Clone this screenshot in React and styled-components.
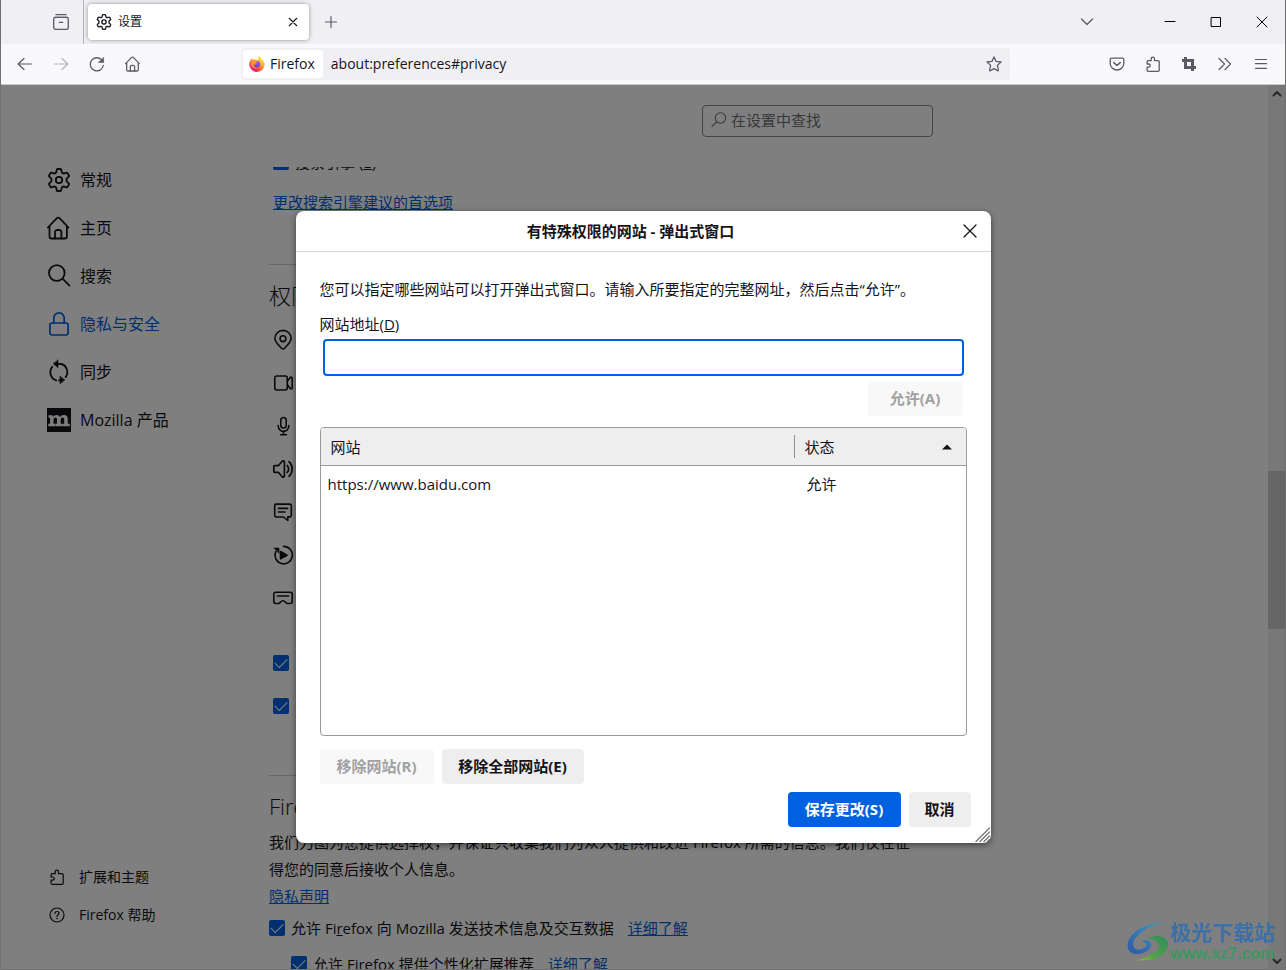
import React from "react";
import styled, { createGlobalStyle, css } from "styled-components";

const GlobalStyle = createGlobalStyle`
  *, *::before, *::after { box-sizing: border-box; }
  body {
    margin: 0;
    font-family: "Open Sans", "Noto Sans CJK SC", sans-serif;
    font-size: 15px;
    line-height: 20px;
    color: #15141a;
  }
  button, input { font: inherit; color: inherit; }
  h1, h2, p, ul { margin: 0; padding: 0; font-weight: 400; }
`;

/* ---------- icons ---------- */

const Svg = styled.svg`
  display: block;
  flex: none;
  fill: none;
  stroke: currentColor;
  stroke-linecap: round;
  stroke-linejoin: round;
  overflow: visible;
`;

const Icon = ({ size = 16, box = 16, weight = 1.2, children }) => (
  <Svg width={size} height={size} viewBox={`0 0 ${box} ${box}`} strokeWidth={weight} aria-hidden="true">
    {children}
  </Svg>
);

const GearIcon = (p) => (
  <Icon box={24} weight={1.8} {...p}>
    <circle cx="12" cy="12" r="3.2" />
    <path d="M10.600 1h2.800c.5 0 .8.300.9.800l.5 2.700 1.900 1.100 2.600-.9c.5-.2.900 0 1.200.4l1.400 2.400c.2.400.2.900-.2 1.200l-2.100 1.900v2.800l2.100 1.900c.4.300.4.800.2 1.200l-1.400 2.400c-.3.400-.7.600-1.200.4l-2.600-.9-1.900 1.100-.5 2.700c-.1.500-.4.800-.9.800h-2.800c-.5 0-.8-.3-.9-.8l-.5-2.700-1.900-1.100-2.600.9c-.5.200-.9 0-1.200-.4l-1.400-2.400c-.2-.4-.2-.9.200-1.200l2.100-1.900v-2.800L2.300 8.700c-.4-.3-.4-.8-.2-1.200l1.400-2.400c.3-.4.700-.6 1.200-.4l2.600.9 1.900-1.100.5-2.700c.1-.5.400-.8.900-.8z" />
  </Icon>
);
const HomeIcon = (p) => (
  <Icon box={24} weight={1.8} {...p}>
    <path d="M.900 11.500 9.900 2.100a1.800 1.800 0 0 1 2.600 0l9 9.400M2.500 10v10.500a2 2 0 0 0 2 2h13.400a2 2 0 0 0 2-2V10" />
    <path d="M8 22.500v-6.300A2.200 2.200 0 0 1 10.200 14h2a2.200 2.200 0 0 1 2.200 2.200v6.300" />
  </Icon>
);
const SearchIcon = (p) => (
  <Icon box={24} weight={1.8} {...p}>
    <circle cx="9.800" cy="9" r="7.800" />
    <path d="m15.500 14.600 7 7" />
  </Icon>
);
const LockIcon = (p) => (
  <Icon box={24} weight={1.7} {...p}>
    <rect x="2.900" y="11" width="18.200" height="12" rx="2.200" />
    <path d="M6.800 11V6a5.200 5.200 0 0 1 10.400 0v5" />
  </Icon>
);
const SyncIcon = (p) => (
  <Icon box={24} weight={1.800} {...p}>
    <path d="M9.300 20.300A8.400 8.400 0 0 1 5.300 6.900M10.500 3.800H12a8.400 8.400 0 0 1 6.700 13.300M14.700 3.900a8.400 8.400 0 0 1 5 5M13.500 20.300H12" />
    <path d="M11 .2v7.400L6.400 3.900zM13 16.400v7.400l4.600-3.700z" fill="currentColor" strokeWidth=".6" />
  </Icon>
);
const MozillaIcon = () => (
  <Icon size={24} box={24}>
    <path d="M0 0h24v24H0z" fill="#15141a" stroke="none" />
    <path
      d="M1.500 7.200h4.300v2C6.700 7.700 8 6.900 9.600 6.900c1.700 0 2.900.8 3.400 2.300.8-1.500 2.100-2.300 3.900-2.300 2.500 0 3.900 1.500 3.900 4.200v4.600h2v2.600h-7.300v-2.600h1.700v-4.100c0-1.300-.5-2-1.500-2-1.300 0-2 1-2 2.800v3.300h1.600v2.600H8.500v-2.600H10v-4.100c0-1.300-.5-2-1.500-2-1.300 0-2 1-2 2.800v3.300h1.700v2.600H1.300v-2.600h1.800v-5.900H1.500z"
      fill="#fff"
      stroke="none"
    />
  </Icon>
);
const PuzzleIcon = (p) => (
  <Icon {...p}>
    <path d="M6.200 4.700V2.800a1.600 1.600 0 0 1 3.300 0v1.900h3.600c.7 0 1.100.4 1.100 1.100v8.400c0 .7-.4 1.100-1.100 1.100H3.200c-.7 0-1.100-.4-1.100-1.100v-3h1.600a1.600 1.600 0 0 0 0-3.200H2.100V5.800c0-.7.4-1.100 1.100-1.100z" />
  </Icon>
);
const HelpIcon = (p) => (
  <Icon {...p}>
    <circle cx="8" cy="8" r="7" />
    <path d="M6 6.400C6 5.200 6.900 4.500 8 4.500s2 .7 2 1.800c0 1.500-2 1.500-2 3.100" />
    <circle cx="8" cy="11.500" r=".5" fill="currentColor" strokeWidth=".6" />
  </Icon>
);
const PinIcon = () => (
  <Icon size={20} box={20} weight={1.6}>
    <path d="M10 19c-.6 0-1-.3-1.500-.8C5 14.600 1.900 11.900 1.900 8.500a8.100 8.100 0 0 1 16.200 0c0 3.400-3.100 6.100-6.600 9.700-.5.500-.9.800-1.500.8z" />
    <circle cx="10" cy="8.700" r="2.900" />
  </Icon>
);
const CameraIcon = () => (
  <Icon size={20} box={20} weight={1.6}>
    <rect x="1.800" y="3" width="12.500" height="14" rx="2" />
    <path d="m14.500 8 2.800-3.400c.8-.8 1.900-.4 1.900.8v9.200c0 1.200-1.100 1.600-1.900.8L14.500 12" />
  </Icon>
);
const MicIcon = () => (
  <Icon size={20} box={20} weight={1.6}>
    <rect x="7.800" y="1.500" width="5.400" height="10.500" rx="2.700" />
    <path d="M5.200 9.500v.6a5.300 5.300 0 0 0 10.600 0v-.6M10.500 15.500v3M7.500 18.700h6" />
  </Icon>
);
const SpeakerIcon = () => (
  <Icon size={20} box={20} weight={1.7}>
    <path d="M1.800 6.700h3.500L9.200 2.200c.8-.8 2.200-.4 2.200.8v14c0 1.200-1.400 1.600-2.200.8l-3.900-4.500H1.800c-.6 0-1-.4-1-1V7.700c0-.6.4-1 1-1z" />
    <path d="M14.200 6.500a5.500 5.500 0 0 1 0 7M16 2.700a10 10 0 0 1 0 14.600" />
  </Icon>
);
const ChatIcon = () => (
  <Icon size={20} box={20} weight={1.6}>
    <path d="M3.200 2.100h13.600c.9 0 1.500.6 1.500 1.500v9.800c0 .9-.6 1.500-1.500 1.500h-2v3.600L10.500 15H3.200c-.9 0-1.500-.6-1.500-1.500V3.600c0-.9.600-1.500 1.500-1.500z" />
    <path d="M5.500 6.400h9M5.500 10h6.500" />
  </Icon>
);
const AutoplayIcon = () => (
  <Icon size={20} box={20} weight={1.6}>
    <path d="M10.500 1.400a8.700 8.700 0 1 1-7.800 5.200" />
    <path d="M1 3h5v5z" fill="currentColor" strokeWidth=".6" />
    <path d="m7.500 6.500 6.500 3.700-6.500 3.700z" fill="currentColor" />
  </Icon>
);
const HeadsetIcon = () => (
  <Icon size={20} box={20} weight={1.6}>
    <path d="M2.800 4.300h14.400c1.200 0 2 .8 2 2v7.200c0 1.200-.8 2-2 2h-2.700c-1.500 0-2.300-2.700-4.500-2.700s-3 2.700-4.500 2.700H2.800c-1.200 0-2-.8-2-2V6.300c0-1.200.8-2 2-2z" />
    <path d="M4.500 8h11" />
  </Icon>
);
const CloseIcon = ({ size = 16, weight = 1.2 }) => (
  <Icon size={size} weight={weight}>
    <path d="m2 2 12 12M14 2 2 14" />
  </Icon>
);
const FirefoxLogo = () => (
  <Svg width="16" height="16" viewBox="0 0 16 16" aria-hidden="true" strokeWidth="0">
    <defs>
      <linearGradient id="flame" x1=".85" y1=".1" x2=".25" y2=".95">
        <stop offset="0" stopColor="#fff44f" />
        <stop offset=".4" stopColor="#ffa436" />
        <stop offset=".7" stopColor="#ff4f3e" />
        <stop offset="1" stopColor="#e8128a" />
      </linearGradient>
      <radialGradient id="globe" cx=".6" cy=".3" r=".8">
        <stop offset="0" stopColor="#9059ff" />
        <stop offset="1" stopColor="#5b3fc4" />
      </radialGradient>
    </defs>
    <path d="M10 .1c2 1 2.600 2.500 3.200 3.500 1.500 1 2.500 3 2.500 5A7.700 7.700 0 0 1 8 16 7.700 7.700 0 0 1 .3 8.500c0-2 .7-3.600 1.500-4.700V2.600c.5.200 1 .6 1.300 1 .6-.3 1.700-.4 2.500 0L9.200 4C9 2.500 9.200 1.200 10 .1z" fill="url(#flame)" />
    <circle cx="7.900" cy="8.200" r="3.100" fill="url(#globe)" />
    <path d="M2.800 4.600c1.500-1 3.200-.6 4 .6.700.2 1.500.3 1.700.6 0 .6-.9 1-1.700 1.100-.5.300-.5 1.300 0 1.900-1.200.2-2-.3-2.700-.8 0 2 1.400 3.500 3.500 3.700-3 .9-5.600-1.300-5.600-4z" fill="#ff9a2e" />
  </Svg>
);

/* ---------- browser chrome ---------- */

const Window = styled.div`
  display: flex;
  flex-direction: column;
  height: 100vh;
  border: solid #707070;
  border-width: 0 1px 1px;
  overflow: hidden;
`;

const TitleBar = styled.header`
  display: flex;
  align-items: stretch;
  height: 44px;
  flex: none;
  background: #f0eff4;
  color: #5b5b66;
`;

const ChromeButton = styled.button`
  display: flex;
  align-items: center;
  justify-content: center;
  flex: none;
  width: ${(p) => p.$width || 36}px;
  padding: 0;
  border: 0;
  background: none;
  color: ${(p) => p.$color || "#5b5b66"};
`;

const FirefoxView = styled.div`
  display: flex;
  justify-content: flex-end;
  width: 83px;
  padding-right: 5px;
  border-right: 1px solid #b4b3b9;
`;

const Tab = styled.div`
  display: flex;
  align-items: center;
  gap: 6px;
  width: 221px;
  margin: 4px;
  padding: 0 4px 0 8px;
  border-radius: 4px;
  background: #fff;
  box-shadow: 0 0 4px rgba(0, 0, 0, 0.4);
  color: #15141a;
  font-size: 12px;
`;

const TabTitle = styled.span`
  flex: 1;
`;

const WindowControls = styled.div`
  display: flex;
  margin-left: auto;
`;

const ListTabs = styled.div`
  display: flex;
  margin-right: 40px;
`;

const NavBar = styled.div`
  display: flex;
  align-items: stretch;
  height: 41px;
  flex: none;
  padding: 0 6px;
  background: #f9f9fb;
  border-bottom: 1px solid #cccccf;
  font-size: 14px;
`;

const UrlBar = styled.div`
  display: flex;
  align-items: center;
  flex: 1;
  min-width: 0;
  margin: 4px 89px 4px 90px;
  padding: 2px 0 2px 2px;
  border-radius: 4px;
  background: #f0eff4;
`;

const Identity = styled.button`
  display: flex;
  align-items: center;
  gap: 5px;
  align-self: stretch;
  padding: 0 8px 0 6px;
  border: 0;
  border-radius: 3px;
  background: #fff;
`;

const UrlInput = styled.input`
  flex: 1;
  min-width: 0;
  padding: 0 8px;
  border: 0;
  background: none;
  outline: none;
`;

/* ---------- settings page ---------- */

const Content = styled.div`
  position: relative;
  display: flex;
  flex: 1;
  min-height: 0;
  background: #fff;
`;

const Sidebar = styled.nav`
  display: flex;
  flex-direction: column;
  justify-content: space-between;
  width: 268px;
  flex: none;
  padding: 71px 0 35px 46px;
`;

const NavList = styled.ul`
  list-style: none;
`;

const NavLink = styled.a`
  display: flex;
  align-items: center;
  height: 48px;
  gap: 9px;
  font-size: 16px;
  color: ${(p) => (p.$active ? "#0061e0" : "#15141a")};
  text-decoration: none;
  ${(p) =>
    p.$small &&
    css`
      height: 38px;
      gap: 14px;
      padding-left: 2px;
      font-size: 14px;
    `}
`;

const Main = styled.main`
  display: flex;
  flex-direction: column;
  flex: 1;
  min-width: 0;
  max-width: 664px;
`;

const SearchArea = styled.div`
  display: flex;
  justify-content: flex-end;
  flex: none;
  height: 82px;
  padding-top: 20px;
`;

const SearchBox = styled.label`
  display: flex;
  align-items: center;
  gap: 4px;
  width: 231px;
  height: 32px;
  padding: 0 8px 2px;
  border: 1px solid #8a8a8e;
  border-radius: 4px;
  color: #73737a;
`;

const FlippedIcon = styled.span`
  transform: scaleX(-1);
`;

const SearchInput = styled.input`
  flex: 1;
  min-width: 0;
  padding: 0;
  border: 0;
  background: none;
  &::placeholder {
    color: #73737a;
    opacity: 1;
  }
`;

const ScrollArea = styled.div`
  flex: 1;
  min-height: 0;
  overflow: hidden;
`;

const ScrolledPane = styled.div`
  margin-top: -15px;
`;

const Indented = styled.div`
  padding-left: 4px;
`;

const Link = styled.a`
  color: #0061e0;
  text-decoration: underline;
`;

const LinkLine = styled.p`
  margin-top: ${(p) => p.$top || 0}px;
`;

const Divider = styled.hr`
  margin: ${(p) => p.$top}px 0 15px;
  border: 0;
  border-top: 1px solid #cfcfd2;
`;

const Heading = styled.h2`
  margin-bottom: 8px;
  font-size: 22px;
  line-height: 30px;
  font-weight: 300;
`;

const PermissionRow = styled.div`
  display: flex;
  align-items: center;
  height: 43px;
`;

const CheckGroup = styled.div`
  margin-top: 22px;
`;

const CheckRow = styled.div`
  display: flex;
  align-items: center;
  gap: 6px;
  height: ${(p) => p.$height || 36}px;
  padding-left: ${(p) => p.$indent || 0}px;
  white-space: nowrap;
`;

const LearnMore = styled(Link)`
  margin-left: 8px;
`;

const Tick = styled.input`
  appearance: none;
  flex: none;
  width: 16px;
  height: 16px;
  margin: 0;
  border-radius: 2px;
  background: #0061e0;
  display: grid;
  place-items: center;
  &::before {
    content: "";
    width: 12px;
    height: 7px;
    margin-top: -3px;
    border: solid #fff;
    border-width: 0 0 1px 1px;
    transform: rotate(-45deg);
  }
`;

const Notice = styled.p`
  max-width: 652px;
  line-height: 27px;
`;

const Scrollbar = styled.div`
  display: flex;
  flex-direction: column;
  align-items: center;
  width: 17px;
  flex: none;
  margin-left: auto;
  background: #f0f0f0;
  color: #505050;
`;

const ScrollEnd = styled.div`
  display: flex;
  align-items: center;
  height: 17px;
`;

const ScrollTrack = styled.div`
  display: flex;
  flex-direction: column;
  flex: 1;
  align-self: stretch;
`;

const ThumbSpace = styled.div`
  flex: ${(p) => p.$grow} 0 0;
`;

const ScrollThumb = styled.div`
  flex: 158 0 0;
  background: #cdcdcd;
`;

/* ---------- dialog ---------- */

const Overlay = styled.div`
  position: absolute;
  inset: 0;
  display: flex;
  align-items: center;
  justify-content: center;
  background: rgba(0, 0, 0, 0.5);
`;

const Dialog = styled.section`
  position: relative;
  width: 695px;
  max-width: calc(100% - 32px);
  border-radius: 8px;
  background: #fff;
  box-shadow: 0 2px 6px rgba(0, 0, 0, 0.5);
`;

const DialogHeader = styled.div`
  display: flex;
  align-items: center;
  height: 41px;
  padding: 0 5px 0 12px;
  border-bottom: 1px solid #d6d6d8;
`;

const DialogTitle = styled.h1`
  flex: 1;
  font-size: 15px;
  font-weight: 700;
  text-align: center;
`;

const DialogBody = styled.div`
  padding: 27px 24px 0;
`;

const Label = styled.label`
  display: block;
  margin: 15px 0 5px;
`;

const AddressInput = styled.input`
  display: block;
  width: calc(100% - 6px);
  height: 37px;
  margin: 0 3px;
  padding: 0 8px;
  border: 2px solid #0061e0;
  border-radius: 4px;
  outline: none;
`;

const Button = styled.button`
  height: 35px;
  min-width: ${(p) => p.$min || 0}px;
  padding: 0 14px 2px;
  border: 0;
  border-radius: 4px;
  background: ${(p) => (p.$primary ? "#0061e0" : "#eeeeef")};
  color: ${(p) => (p.$primary ? "#fff" : "#15141a")};
  font-weight: 700;
  white-space: nowrap;
  &:disabled {
    background: #f8f8f8;
    color: #a1a1a3;
  }
`;

const ButtonRow = styled.div`
  display: flex;
  gap: 8px;
  justify-content: ${(p) => (p.$end ? "flex-end" : "flex-start")};
  padding: ${(p) => p.$pad};
`;

const TableFrame = styled.div`
  height: 309px;
  margin-top: 11px;
  border: 1px solid #9a9a9d;
  border-radius: 4px;
  overflow: hidden;
`;

const SiteTable = styled.table`
  width: 100%;
  border-collapse: separate;
  border-spacing: 0;
  table-layout: fixed;
`;

const HeadCell = styled.th`
  height: 38px;
  padding: 0;
  border-bottom: 1px solid #9a9a9d;
  background: #eeeeef;
  font-weight: 400;
  text-align: left;
  width: ${(p) => p.$width || "auto"};
`;

const HeadContent = styled.div`
  display: flex;
  align-items: center;
  justify-content: space-between;
  height: 23px;
  padding: 0 14px 0 10px;
  border-left: ${(p) => (p.$ruled ? "1px solid #8f8f92" : "0")};
`;

const Cell = styled.td`
  height: 36px;
  padding: 0 0 0 ${(p) => p.$left}px;
`;

const Resizer = styled.div`
  position: absolute;
  right: 0;
  bottom: 0;
  color: #76767a;
`;

const Watermark = styled.div`
  position: absolute;
  right: 10px;
  bottom: 5px;
  display: flex;
  align-items: center;
  gap: 1px;
`;

const WatermarkName = styled.div`
  font-size: 21px;
  line-height: 24px;
  font-weight: 700;
  color: #3c70a8;
`;

const WatermarkUrl = styled.div`
  font-family: "Liberation Sans", sans-serif;
  font-size: 16px;
  line-height: 20px;
  font-weight: 700;
  color: #3c9860;
`;

const navItems = [
  { label: "常规", icon: <GearIcon size={24} /> },
  { label: "主页", icon: <HomeIcon size={24} /> },
  { label: "搜索", icon: <SearchIcon size={24} /> },
  { label: "隐私与安全", icon: <LockIcon size={24} />, active: true },
  { label: "同步", icon: <SyncIcon size={24} /> },
  { label: "Mozilla 产品", icon: <MozillaIcon /> },
];

const permissions = [PinIcon, CameraIcon, MicIcon, SpeakerIcon, ChatIcon, AutoplayIcon, HeadsetIcon];

const Chevron = ({ d }) => (
  <Icon size={10} box={10} weight={2}>
    <path d={d} />
  </Icon>
);

export default function App() {
  return (
    <Window>
      <GlobalStyle />
      <TitleBar>
        <FirefoxView>
          <ChromeButton aria-label="Firefox View" $width={34}>
            <Icon weight={1.3}>
              <path d="M3 .7h10M1.500 3.400h13" />
              <rect x=".7" y="3.400" width="14.600" height="11.900" rx="2" />
              <path d="M6.300 8.300h3.400" />
            </Icon>
          </ChromeButton>
        </FirefoxView>
        <Tab>
          <GearIcon size={16} weight={2} />
          <TabTitle>设置</TabTitle>
          <ChromeButton aria-label="关闭标签页" $width={24} $color="#15141a">
            <CloseIcon size={10} weight={1.8} />
          </ChromeButton>
        </Tab>
        <ChromeButton aria-label="新建标签页">
          <Icon size={12} box={12}>
            <path d="M6 .5v11M.5 6h11" />
          </Icon>
        </ChromeButton>
        <WindowControls>
          <ListTabs>
            <ChromeButton aria-label="列出所有标签页" $width={40}>
              <Icon size={12} box={12} weight={1.3}>
                <path d="m.5 3 5.500 5.500L11.500 3" />
              </Icon>
            </ChromeButton>
          </ListTabs>
          <ChromeButton aria-label="最小化" $width={46} $color="#000">
            <Icon size={10} box={10} weight={1}>
              <path d="M0 4.500h10" />
            </Icon>
          </ChromeButton>
          <ChromeButton aria-label="最大化" $width={46} $color="#000">
            <Icon size={10} box={10} weight={1}>
              <path d="M.5.5h9v9h-9z" />
            </Icon>
          </ChromeButton>
          <ChromeButton aria-label="关闭" $width={46} $color="#000">
            <Icon size={10} box={10} weight={1}>
              <path d="m0 0 10 10M10 0 0 10" />
            </Icon>
          </ChromeButton>
        </WindowControls>
      </TitleBar>

      <NavBar>
        <ChromeButton aria-label="后退">
          <Icon>
            <path d="M1.300 8h13.400M7 2.500 1.200 8 7 13.500" />
          </Icon>
        </ChromeButton>
        <ChromeButton aria-label="前进" $color="#b8b8bd">
          <Icon>
            <path d="M1.300 8h13.400M9 2.500 14.800 8 9 13.500" />
          </Icon>
        </ChromeButton>
        <ChromeButton aria-label="重新载入">
          <Icon weight={1.3}>
            <path d="M14.300 9.500A6.600 6.600 0 1 1 12.500 3.700" />
            <path d="M14.600 1.500v5H9.600z" fill="currentColor" strokeWidth=".6" />
          </Icon>
        </ChromeButton>
        <ChromeButton aria-label="主页">
          <HomeIcon size={16} weight={1.9} />
        </ChromeButton>
        <UrlBar>
          <Identity>
            <FirefoxLogo />
            Firefox
          </Identity>
          <UrlInput aria-label="网址" defaultValue="about:preferences#privacy" />
          <ChromeButton aria-label="为此页添加书签" $width={32}>
            <Icon weight={1.3}>
              <path d="M8 .9l2.100 4.500 4.900.6-3.600 3.400 1 4.900a.5.5 0 0 1-.7.500L8 12.600l-3.700 2.200a.5.5 0 0 1-.7-.5l1-4.900L1 6l4.900-.6z" />
            </Icon>
          </ChromeButton>
        </UrlBar>
        <ChromeButton aria-label="保存到 Pocket">
          <Icon weight={1.3}>
            <path d="M2.500 2.200h11c.7 0 1.300.5 1.300 1.200v3.800a6.800 6.800 0 0 1-13.600 0V3.400c0-.7.6-1.200 1.300-1.200z" />
            <path d="M4.800 6.600 8 9.500l3.200-2.900" strokeWidth="1.500" />
          </Icon>
        </ChromeButton>
        <ChromeButton aria-label="扩展">
          <PuzzleIcon weight={1.3} />
        </ChromeButton>
        <ChromeButton aria-label="截图">
          <Icon weight={3}>
            <path d="M4.500 1v10.500H15M1 4.500h10.500V15" strokeLinecap="butt" strokeLinejoin="miter" />
          </Icon>
        </ChromeButton>
        <ChromeButton aria-label="更多工具">
          <Icon>
            <path d="m2 2.500 5.500 5.500L2 13.500M8 2.500 13.500 8 8 13.500" />
          </Icon>
        </ChromeButton>
        <ChromeButton aria-label="打开应用程序菜单">
          <Icon weight={1.2}>
            <path d="M2.500 3.500h11M2.500 7.700h11M2.500 12.300h11" />
          </Icon>
        </ChromeButton>
      </NavBar>

      <Content>
        <Sidebar>
          <NavList>
            {navItems.map((item) => (
              <li key={item.label}>
                <NavLink href="#" $active={item.active}>
                  {item.icon}
                  {item.label}
                </NavLink>
              </li>
            ))}
          </NavList>
          <NavList>
            <li>
              <NavLink href="#" $small>
                <PuzzleIcon />
                扩展和主题
              </NavLink>
            </li>
            <li>
              <NavLink href="#" $small>
                <HelpIcon />
                Firefox 帮助
              </NavLink>
            </li>
          </NavList>
        </Sidebar>

        <Main>
          <SearchArea>
            <SearchBox>
              <FlippedIcon>
                <SearchIcon size={16} weight={1.7} />
              </FlippedIcon>
              <SearchInput placeholder="在设置中查找" aria-label="在设置中查找" />
            </SearchBox>
          </SearchArea>
          <ScrollArea>
            <ScrolledPane>
              <Indented>
                <CheckRow $height={20}>
                  <Tick type="checkbox" id="engines" defaultChecked />
                  <label htmlFor="engines">
                    搜索引擎 (<u>E</u>)
                  </label>
                </CheckRow>
                <LinkLine $top={20}>
                  <Link href="#">更改搜索引擎建议的首选项</Link>
                </LinkLine>
              </Indented>
              <Divider $top={52} />
              <Heading>权限</Heading>
              <Indented>
                {permissions.map((Glyph, i) => (
                  <PermissionRow key={i}>
                    <Glyph />
                  </PermissionRow>
                ))}
                <CheckGroup>
                  <CheckRow $height={43}>
                    <Tick type="checkbox" aria-label="阻止弹出式窗口" defaultChecked />
                  </CheckRow>
                  <CheckRow $height={43}>
                    <Tick type="checkbox" aria-label="当网站尝试安装附加组件时警告您" defaultChecked />
                  </CheckRow>
                </CheckGroup>
              </Indented>
              <Divider $top={48} />
              <Heading>Firefox 数据收集与使用</Heading>
              <Notice>
                我们力图为您提供选择权，并保证只收集我们为众人提供和改进 Firefox 所需的信息。我们仅在征得您的同意后接收个人信息。
                <br />
                <Link href="#">隐私声明</Link>
              </Notice>
              <CheckRow>
                <Tick type="checkbox" id="telemetry" defaultChecked />
                <label htmlFor="telemetry">
                  允许 Fi<u>r</u>efox 向 Mozilla 发送技术信息及交互数据
                </label>
                <LearnMore href="#">详细了解</LearnMore>
              </CheckRow>
              <CheckRow $indent={22}>
                <Tick type="checkbox" id="recommend" defaultChecked />
                <label htmlFor="recommend">允许 Firefox 提供个性化扩展推荐</label>
                <LearnMore href="#">详细了解</LearnMore>
              </CheckRow>
            </ScrolledPane>
          </ScrollArea>
        </Main>

        <Scrollbar>
          <ScrollEnd>
            <Chevron d="M1.500 6.500 5 3l3.500 3.500" />
          </ScrollEnd>
          <ScrollTrack>
            <ThumbSpace $grow={369} />
            <ScrollThumb />
            <ThumbSpace $grow={323} />
          </ScrollTrack>
          <ScrollEnd>
            <Chevron d="M1.500 3.500 5 7l3.500-3.500" />
          </ScrollEnd>
        </Scrollbar>

        <Overlay>
          <Dialog role="dialog" aria-labelledby="dialog-title">
            <DialogHeader>
              <DialogTitle id="dialog-title">有特殊权限的网站 - 弹出式窗口</DialogTitle>
              <ChromeButton aria-label="关闭对话框" $width={32} $color="#15141a">
                <CloseIcon weight={1.3} />
              </ChromeButton>
            </DialogHeader>
            <DialogBody>
              <p>您可以指定哪些网站可以打开弹出式窗口。请输入所要指定的完整网址，然后点击“允许”。</p>
              <Label htmlFor="address">
                网站地址(<u>D</u>)
              </Label>
              <AddressInput id="address" type="text" />
              <ButtonRow $end $pad="5px 4px 0">
                <Button disabled $min={95}>
                  允许(A)
                </Button>
              </ButtonRow>
              <TableFrame>
                <SiteTable>
                  <thead>
                    <tr>
                      <HeadCell>
                        <HeadContent>网站</HeadContent>
                      </HeadCell>
                      <HeadCell $width="172px">
                        <HeadContent $ruled>
                          状态
                          <Svg width="10" height="6" viewBox="0 0 10 6" strokeWidth="0" aria-hidden="true">
                            <path d="m0 5.500 4.200-4.200a1 1 0 0 1 1.600 0L10 5.500z" fill="#15141a" />
                          </Svg>
                        </HeadContent>
                      </HeadCell>
                    </tr>
                  </thead>
                  <tbody>
                    <tr>
                      <Cell $left={7}>https://www.baidu.com</Cell>
                      <Cell $left={13}>允许</Cell>
                    </tr>
                  </tbody>
                </SiteTable>
              </TableFrame>
              <ButtonRow $pad="13px 0 0">
                <Button disabled $min={114}>
                  移除网站(R)
                </Button>
                <Button $min={142}>移除全部网站(E)</Button>
              </ButtonRow>
            </DialogBody>
            <ButtonRow $end $pad="8px 20px 16px">
              <Button $primary $min={113}>
                保存更改(S)
              </Button>
              <Button $min={62}>取消</Button>
            </ButtonRow>
            <Resizer>
              <Icon size={16} weight={1.3}>
                <path d="M1 14.500 14.500 1M5 14.500 14.500 5M9 14.500 14.500 9M12.500 14.500l2-2" />
              </Icon>
            </Resizer>
          </Dialog>
        </Overlay>

        <Watermark>
          <Svg width="42" height="42" viewBox="0 0 42 42" strokeWidth="0" aria-hidden="true">
            <defs>
              <linearGradient id="swirl-blue" x1="1" y1="0" x2="0" y2="1">
                <stop offset="0" stopColor="#3ba0c0" />
                <stop offset="1" stopColor="#3058a8" />
              </linearGradient>
              <linearGradient id="swirl-green" x1="1" y1="0" x2="0" y2="1">
                <stop offset="0" stopColor="#2f8c5c" />
                <stop offset=".6" stopColor="#4fa348" />
                <stop offset="1" stopColor="#c0bc28" />
              </linearGradient>
            </defs>
            <path
              d="M40 1C24 1 5 8 1 21c-2 9 4 13 11 12 8-1 13-6 12-10-1-4-6-5-9-2 3 0 5 2 4 4-2 4-10 5-12 1-3-6 4-13 12-18 5-3 12-6 21-7z"
              fill="url(#swirl-blue)"
            />
            <path d="M20 17c9-4 20-2 21 5 1 9-10 17-20 17-5 0-10 0-16 2 13-4 27-9 27-16 0-5-5-7-12-8z" fill="url(#swirl-green)" />
          </Svg>
          <div>
            <WatermarkName>极光下载站</WatermarkName>
            <WatermarkUrl>www.xz7.com</WatermarkUrl>
          </div>
        </Watermark>
      </Content>
    </Window>
  );
}
